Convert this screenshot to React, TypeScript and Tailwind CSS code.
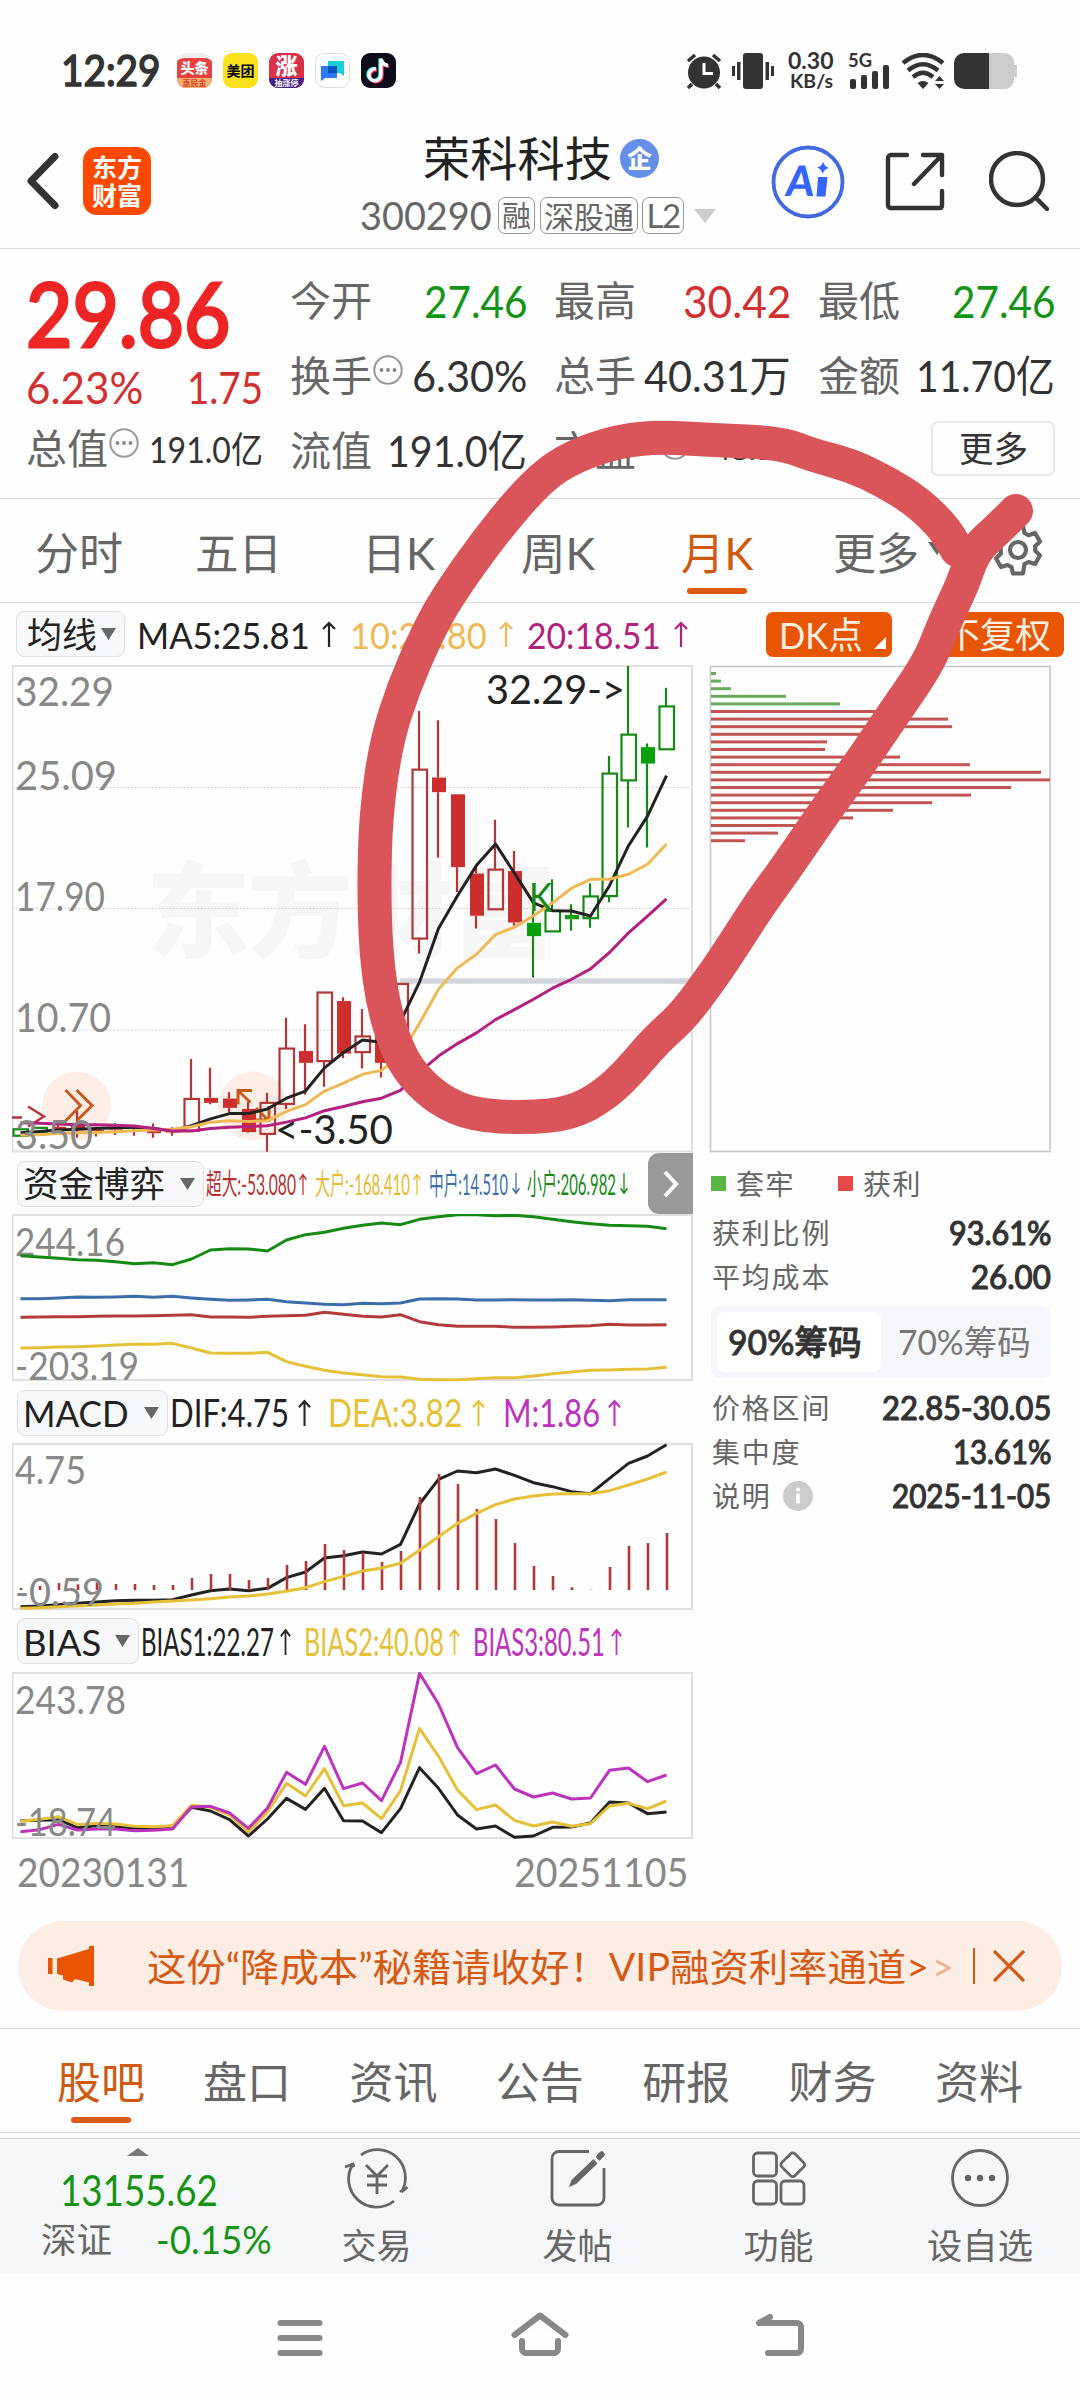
import { useLayoutEffect, useRef, useState } from 'react'
import type { ReactNode } from 'react'

const STEP = 19
const X0 = 20

// Text squeezed or stretched sideways to fill the width of its box
function FitText({ className, children }: { className: string; children: ReactNode }) {
  const outer = useRef<HTMLSpanElement>(null)
  const inner = useRef<HTMLSpanElement>(null)
  const [scale, setScale] = useState(1)

  useLayoutEffect(() => {
    if (outer.current && inner.current) {
      setScale(outer.current.clientWidth / inner.current.offsetWidth)
    }
  }, [])

  return (
    <span ref={outer} className={`block shrink-0 whitespace-nowrap leading-none ${className}`}>
      <span ref={inner} className="inline-block origin-left" style={{ transform: `scaleX(${scale})` }}>
        {children}
      </span>
    </span>
  )
}

function Arrow({ down, className }: { down?: boolean; className: string }) {
  return (
    <svg viewBox="0 0 14 26" preserveAspectRatio="none" className={`shrink-0 ${className}`} fill="none" stroke="currentColor" strokeWidth="2.2">
      {down ? <path d="M7 0V24M1 18l6 6 6-6" /> : <path d="M7 26V2M1 8l6-6 6 6" />}
    </svg>
  )
}

function Caret({ className }: { className: string }) {
  return (
    <svg viewBox="0 0 14 12" preserveAspectRatio="none" className={`shrink-0 ${className}`}>
      <path d="M0 0h14L7 12z" fill="currentColor" />
    </svg>
  )
}

function MoreDot() {
  return (
    <svg viewBox="0 0 30 30" className="mb-[11px] size-[30px] shrink-0">
      <circle cx="15" cy="15" r="13.7" fill="none" stroke="#999" strokeWidth="2" />
      <circle cx="8.5" cy="15" r="1.9" fill="#888" />
      <circle cx="15" cy="15" r="1.9" fill="#888" />
      <circle cx="21.5" cy="15" r="1.9" fill="#888" />
    </svg>
  )
}

function StatusBar() {
  return (
    <div className="flex h-[124px] items-start pl-[61px] pt-[53px] text-[#333]">
      <FitText className="mt-[-5px] w-[100px] text-[43px] [-webkit-text-stroke:1.6px]">12:29</FitText>
      <div className="ml-4 flex gap-[11px]">
        <div className="flex size-[35px] flex-col items-center overflow-hidden rounded-[9px] border-t-[5px] border-[#eee] bg-[#e8413f] text-white">
          <span className="text-[14px] font-black leading-[20px]">头条</span>
          <span className="w-full bg-[#f6b26b] text-center text-[8px] font-bold leading-[10px] text-[#e0402c]">惠民金</span>
        </div>
        <div className="flex size-[35px] items-center justify-center rounded-[9px] bg-[#fbe11c] text-[14px] font-bold text-black">美团</div>
        <div className="flex size-[35px] flex-col items-center overflow-hidden rounded-[9px] bg-[#dc3048] text-white">
          <span className="text-[22px] font-black leading-[25px]">涨</span>
          <span className="w-full bg-[#45208c] text-center text-[8px] font-bold leading-[10px]">抽涨停</span>
        </div>
        <svg viewBox="0 0 35 35" className="size-[35px]">
          <rect x="0.5" y="0.5" width="34" height="34" rx="9" fill="#fff" stroke="#ddd" />
          <path d="M6 13h16v12H10l-4 3z" fill="#2b7cf6" />
          <path d="M13 8h16v15l-4-3H13z" fill="#16cfd8" />
          <path d="M13 13h9v7h-9z" fill="#0a55b8" />
        </svg>
        <svg viewBox="0 0 35 35" className="size-[35px]">
          <rect width="35" height="35" rx="9" fill="#0d0b18" />
          <g fill="none" strokeWidth="3.4">
            <path d="M14 15.5a6 6 0 1 0 5 6V5.5c1 4 3.5 6 7 6.5" stroke="#25f4ee" />
            <path d="M16 17a6 6 0 1 0 5 6V7c1 4 3.5 6 7 6.5" stroke="#fe2c55" />
            <path d="M15 16a6 6 0 1 0 5 6V6c1 4 3.5 6 7 6.5" stroke="#fff" />
          </g>
        </svg>
      </div>
      <svg viewBox="0 0 36 36" className="ml-[290px] size-[36px]">
        <circle cx="18" cy="19.5" r="16" fill="#333" />
        <path d="M2 8l7-6M34 8l-7-6M6 31l-4 4M30 31l4 4" stroke="#333" strokeWidth="3.5" />
        <path d="M18 10v10.5h9" fill="none" stroke="#fff" strokeWidth="3" />
      </svg>
      <svg viewBox="0 0 42 36" className="ml-[10px] h-[36px] w-[42px]" fill="#333">
        <rect x="11" width="20" height="36" rx="3" />
        <rect x="5" y="9" width="3.5" height="18" />
        <rect x="33.5" y="9" width="3.5" height="18" />
        <rect y="13" width="3" height="10" />
        <rect x="39" y="13" width="3" height="10" />
      </svg>
      <div className="ml-[14px] mt-[-3px] flex flex-col items-center">
        <FitText className="w-[46px] text-[22px] font-bold">0.30</FitText>
        <FitText className="mt-[-1px] w-[43px] text-[19px] font-bold">KB/s</FitText>
      </div>
      <svg viewBox="0 0 43 37" className="ml-[14px] h-[37px] w-[43px]" fill="#333">
        <text x="0" y="13.5" fontSize="18" fontWeight="bold" textLength="24" lengthAdjust="spacingAndGlyphs">5G</text>
        <rect x="2" y="26" width="6" height="10" rx="2" />
        <rect x="13" y="22" width="6" height="14" rx="2" />
        <rect x="24" y="18" width="6" height="18" rx="2" />
        <rect x="35" y="12" width="6" height="24" rx="2" />
      </svg>
      <svg viewBox="0 0 44 37" className="ml-[10px] h-[37px] w-[44px]" fill="none" stroke="#333" strokeWidth="4.5">
        <path d="M2 10Q22-6 42 10M7 17.5Q22 5 37 17.5M12 24Q22 15.5 32 24" />
        <path d="M16.5 30q5.5-4 11 0L22 36zM34 28l4.5-5 4.5 5zM34 31h9l-4.5 5z" fill="#333" stroke="none" />
      </svg>
      <svg viewBox="0 0 63 36" className="ml-[9px] h-[36px] w-[63px]">
        <path d="M35 0h16a9 9 0 0 1 9 9v3h3v12h-3v3a9 9 0 0 1-9 9H35z" fill="#ccc" />
        <path d="M35 0H10A10 10 0 0 0 0 10v16a10 10 0 0 0 10 10h25z" fill="#333" />
      </svg>
    </div>
  )
}

function Header() {
  return (
    <div className="flex h-[125px] items-start border-b-[1.5px] border-[#d9d9d9] pl-[26px]">
      <svg viewBox="0 0 34 58" className="mt-[28px] h-[58px] w-[34px]" fill="none" stroke="#333" strokeWidth="7" strokeLinecap="round" strokeLinejoin="round">
        <path d="M29 4.5L5 29l24 24.5" />
      </svg>
      <div className="ml-[23px] mt-[23px] flex size-[68px] flex-col items-center justify-center rounded-[14px] bg-[#ff4800] text-[25px] font-bold leading-[28px] text-white">
        <span>东方</span>
        <span>财富</span>
      </div>
      <div className="ml-[209px] w-[364px]">
        <div className="flex items-center pl-[63px] pt-[11px]">
          <FitText className="w-[189px] text-[47px] text-[#222]">荣科科技</FitText>
          <span className="ml-[8px] flex size-[39px] items-center justify-center rounded-full bg-[#6590ea] text-[25px] font-black leading-none text-white">企</span>
        </div>
        <div className="mt-[15px] flex h-[37px] items-center text-[#666]">
          <FitText className="w-[132px] text-[39px]">300290</FitText>
          <span className="ml-[6px] flex h-[37px] w-[37px] items-center justify-center rounded-[7px] border-[1.5px] border-[#999] text-[29px] leading-none">融</span>
          <span className="ml-[5px] flex h-[37px] w-[98px] items-center justify-center rounded-[7px] border-[1.5px] border-[#999] text-[30px] leading-none">深股通</span>
          <span className="ml-[4px] flex h-[37px] w-[42px] items-center justify-center rounded-[7px] border-[1.5px] border-[#999] text-[33px] leading-none tracking-tighter">L2</span>
          <Caret className="ml-[10px] h-[14px] w-[22px] text-[#ccc]" />
        </div>
      </div>
      <svg viewBox="0 0 74 74" className="ml-[47px] mt-[21px] size-[74px]">
        <circle cx="37" cy="37" r="34.5" fill="none" stroke="#4169e1" strokeWidth="3.8" />
        <text x="14" y="51" fontSize="42" fontWeight="900" fill="#3565fb" textLength="28" lengthAdjust="spacingAndGlyphs" transform="skewX(-6) translate(5 0)">A</text>
        <path d="M47 32h9.500l-2 19.500h-9z" fill="#3565fb" />
        <path d="M52 16.500q1.500 5 6 6.500-5 1-6.500 6-1-5-5.500-6.500 5-1 6-6z" fill="#3565fb" />
      </svg>
      <svg viewBox="0 0 60 60" className="ml-[40px] mt-[28px] size-[60px]" fill="none" stroke="#333" strokeWidth="4.4" strokeLinecap="round" strokeLinejoin="round">
        <path d="M22 3H6a3 3 0 0 0-3 3v47a3 3 0 0 0 3 3h49a2 2 0 0 0 2-2V39M38 3h19v20M57 3L29 32" />
      </svg>
      <svg viewBox="0 0 60 60" className="ml-[44px] mt-[27px] size-[60px]" fill="none" stroke="#333" strokeWidth="4.4" strokeLinecap="round">
        <circle cx="28" cy="28" r="26" />
        <path d="M47 47l11 11" />
      </svg>
    </div>
  )
}

function Cell({ label, dot, children }: { label: string; dot?: boolean; children: ReactNode }) {
  return (
    <div className="flex h-[75px] items-center">
      <FitText className="w-[82px] text-[41px] text-[#666]">{label}</FitText>
      {dot && <span className="ml-[1px]"><MoreDot /></span>}
      <div className="ml-auto flex">{children}</div>
    </div>
  )
}

function Quote() {
  return (
    <div className="grid h-[250px] grid-cols-[237px_237px_237px_237px] gap-x-[27px] border-b-[1.5px] border-[#d9d9d9] pl-[26px] pt-[14px] text-[#333]">
      <div>
        <div className="flex h-[99px] items-center">
          <FitText className="w-[205px] text-[89px] text-[#ee2525] [-webkit-text-stroke:3.2px]">29.86</FitText>
        </div>
        <div className="flex h-[49px] items-center justify-between text-[44px] text-[#d13030]">
          <FitText className="w-[117px]">6.23%</FitText>
          <FitText className="w-[76px]">1.75</FitText>
        </div>
        <Cell label="总值" dot><FitText className="w-[114px] text-[36px]">191.0亿</FitText></Cell>
      </div>
      <div>
        <Cell label="今开"><FitText className="w-[103px] text-[44px] text-[#149414]">27.46</FitText></Cell>
        <Cell label="换手" dot><FitText className="w-[115px] text-[43px]">6.30%</FitText></Cell>
        <Cell label="流值"><FitText className="w-[140px] text-[43px]">191.0亿</FitText></Cell>
      </div>
      <div>
        <Cell label="最高"><FitText className="w-[108px] text-[44px] text-[#d13030]">30.42</FitText></Cell>
        <Cell label="总手"><FitText className="w-[147px] text-[43px]">40.31万</FitText></Cell>
        <div className="flex h-[75px] items-center">
          <FitText className="w-[82px] text-[41px] text-[#666]">市盈</FitText>
          <span className="ml-[24px]"><MoreDot /></span>
          <FitText className="ml-auto w-[78px] text-[24px]">48.12</FitText>
        </div>
      </div>
      <div>
        <Cell label="最低"><FitText className="w-[103px] text-[44px] text-[#149414]">27.46</FitText></Cell>
        <Cell label="金额"><FitText className="w-[139px] text-[43px]">11.70亿</FitText></Cell>
        <div className="ml-auto mt-[8px] flex h-[55px] w-[124px] items-center justify-center rounded-[7px] border-2 border-[#e8e8e8]">
          <FitText className="w-[69px] text-[35px]">更多</FitText>
        </div>
      </div>
    </div>
  )
}

function PeriodTabs() {
  return (
    <div className="flex h-[104px] items-start border-b-[1.5px] border-[#d9d9d9] pl-[35px] pt-[32px] text-[44px] text-[#666]">
      <FitText className="w-[88px]">分时</FitText>
      <FitText className="ml-[72px] w-[87px]">五日</FitText>
      <FitText className="ml-[80px] w-[73px]">日K</FitText>
      <FitText className="ml-[86px] w-[74px]">周K</FitText>
      <div className="ml-[86px] text-[#cf5a12]">
        <FitText className="w-[72px]">月K</FitText>
        <div className="ml-[6px] mt-[13px] h-[6px] w-[60px] rounded-full bg-[#dc5a12]" />
      </div>
      <FitText className="ml-[80px] w-[86px]">更多</FitText>
      <Caret className="ml-[9px] mt-[11px] h-[13px] w-[18px]" />
      <svg viewBox="0 0 52 52" className="ml-[46px] mt-[-7px] size-[52px]" fill="none" stroke="#666" strokeWidth="4.2" strokeLinejoin="round">
        <circle cx="26" cy="26" r="8" />
        <path d="M21 2.5h10l1.5 6.5 4 2.3 6.5-2.3 5 8.5-4.8 4.7v4.6l4.8 4.7-5 8.500-6.500-2-4 2.200L31 49.500H21l-1.500-6.300-4-2.200-6.500 2-5-8.500 4.800-4.700v-4.600L4 20.500 9 12l6.500 2 4-2.300z" />
      </svg>
    </div>
  )
}

function MaRow() {
  return (
    <div className="flex h-[62px] items-center pl-[16px] text-[37px]">
      <div className="flex h-[46px] w-[109px] items-center rounded-[8px] border border-[#dde2e6] bg-[#f6f8fa] pl-[10px] text-[#333]">
        <FitText className="w-[70px] text-[35px] text-[#222]">均线</FitText>
        <Caret className="ml-[4px] h-[12px] w-[15px] text-[#666]" />
      </div>
      <FitText className="ml-[12px] w-[173px] text-[#222]">MA5:25.81</FitText>
      <Arrow className="ml-[12px] h-[26px] w-[14px] text-[#222]" />
      <FitText className="ml-[14px] w-[137px] text-[#efb955]">10:22.80</FitText>
      <Arrow className="ml-[12px] h-[26px] w-[14px] text-[#efb955]" />
      <FitText className="ml-[14px] w-[134px] text-[#b3207f]">20:18.51</FitText>
      <Arrow className="ml-[13px] h-[26px] w-[14px] text-[#b3207f]" />
      <div className="ml-[78px] flex h-[45px] w-[126px] items-center rounded-[7px] bg-[#e85505] pl-[13px] text-[#fff0e4]">
        <FitText className="w-[84px] text-[37px]">DK点</FitText>
        <svg viewBox="0 0 12 12" className="ml-[11px] mt-[17px] size-[12px]"><path d="M12 0v12H0z" fill="#fff" /></svg>
      </div>
      <div className="ml-[44px] flex h-[45px] w-[128px] items-center rounded-[7px] bg-[#e85505] pl-[8px] text-[#fff0e4]">
        <FitText className="w-[107px] text-[35px]">不复权</FitText>
      </div>
    </div>
  )
}

// high, body top, body bottom, low
type Candle = [number, number, number, number, 'r' | 'R' | 'g' | 'G']

// Lower case is a hollow body, upper case a filled one
const CANDLES: Candle[] = [
  [1480, 1482, 1500, 1500, 'g'],
  [1476, 1478, 1490, 1492, 'g'],
  [1468, 1475, 1482, 1490, 'R'],
  [1430, 1470, 1480, 1505, 'R'],
  [1475, 1484, 1489, 1502, 'R'],
  [1465, 1478, 1483, 1498, 'R'],
  [1478, 1484, 1489, 1500, 'R'],
  [1466, 1487, 1493, 1506, 'R'],
  [1476, 1486, 1491, 1500, 'R'],
  [1285, 1397, 1486, 1486, 'r'],
  [1310, 1394, 1408, 1412, 'R'],
  [1378, 1396, 1422, 1435, 'R'],
  [1405, 1425, 1490, 1492, 'R'],
  [1380, 1408, 1495, 1545, 'r'],
  [1170, 1256, 1411, 1425, 'r'],
  [1188, 1263, 1296, 1385, 'R'],
  [1099, 1099, 1291, 1363, 'r'],
  [1112, 1123, 1270, 1283, 'R'],
  [1145, 1222, 1266, 1312, 'r'],
  [1160, 1220, 1296, 1337, 'R'],
  [1075, 1075, 1250, 1290, 'r'],
  [311, 475, 948, 990, 'r'],
  [337, 497, 538, 722, 'R'],
  [544, 544, 748, 818, 'R'],
  [748, 766, 884, 920, 'R'],
  [615, 755, 866, 866, 'r'],
  [703, 759, 903, 912, 'R'],
  [870, 904, 941, 1057, 'G'],
  [782, 870, 928, 928, 'g'],
  [852, 882, 894, 926, 'G'],
  [793, 830, 891, 918, 'g'],
  [437, 486, 829, 846, 'g'],
  [185, 377, 505, 637, 'g'],
  [402, 412, 458, 693, 'G'],
  [246, 298, 418, 418, 'g'],
]

const MA5 = [1492, 1488, 1484, 1482, 1480, 1478, 1476, 1480, 1486, 1472, 1453, 1438, 1438, 1425, 1395, 1375, 1310, 1267, 1232, 1238, 1180, 1070, 920, 828, 743, 683, 765, 848, 870, 871, 885, 800, 688, 605, 492]
const MA10 = [1498, 1497, 1494, 1492, 1491, 1489, 1486, 1484, 1482, 1475, 1462, 1458, 1460, 1458, 1432, 1413, 1375, 1353, 1328, 1317, 1275, 1185, 1090, 1030, 992, 937, 916, 884, 848, 807, 782, 782, 768, 740, 683]
const MA20 = [1464, 1465, 1467, 1469, 1469, 1471, 1473, 1480, 1487, 1487, 1480, 1476, 1474, 1472, 1462, 1450, 1430, 1418, 1405, 1395, 1373, 1322, 1277, 1242, 1212, 1175, 1147, 1118, 1087, 1062, 1033, 987, 932, 885, 837]

const FUND_GREEN = [317, 321, 325, 329, 331, 335, 341, 338, 344, 327, 300, 296, 297, 303, 270, 254, 247, 235, 226, 219, 224, 208, 200, 194, 194, 197, 196, 200, 208, 215, 221, 226, 227, 229, 236]
const FUND_BLUE = [446, 446, 444, 441, 442, 441, 439, 442, 439, 444, 448, 451, 450, 448, 455, 459, 463, 464, 460, 461, 459, 447, 446, 447, 450, 450, 449, 450, 450, 449, 451, 452, 449, 449, 449]
const FUND_RED = [502, 501, 500, 500, 499, 498, 498, 497, 496, 494, 501, 501, 502, 499, 497, 496, 487, 493, 499, 501, 494, 515, 524, 529, 529, 529, 532, 532, 531, 529, 527, 523, 525, 525, 524]
const FUND_YELLOW = [594, 593, 591, 590, 588, 585, 583, 583, 580, 594, 609, 610, 610, 607, 635, 649, 661, 669, 674, 680, 681, 688, 689, 689, 686, 683, 683, 678, 671, 666, 661, 660, 658, 657, 652]

const MACD_BARS = [1314, 1308, 1299, 1303, 1298, 1302, 1302, 1305, 1305, 1284, 1272, 1272, 1290, 1284, 1245, 1233, 1182, 1200, 1208, 1236, 1203, 1041, 972, 1002, 1077, 1107, 1179, 1248, 1278, 1312, 1319, 1251, 1188, 1179, 1149]
const DIF = [1370, 1368, 1364, 1360, 1356, 1352, 1351, 1351, 1349, 1335, 1322, 1317, 1322, 1315, 1283, 1266, 1224, 1217, 1206, 1212, 1183, 1062, 988, 963, 968, 957, 976, 998, 1010, 1025, 1031, 985, 940, 918, 884]
const DEA = [1375, 1373, 1370, 1368, 1365, 1362, 1360, 1356, 1353, 1350, 1346, 1341, 1338, 1332, 1324, 1313, 1295, 1279, 1263, 1254, 1240, 1201, 1160, 1120, 1090, 1064, 1047, 1038, 1032, 1031, 1031, 1022, 1005, 987, 966]

const BIAS1 = [662, 661, 659, 683, 677, 680, 684, 685, 678, 622, 633, 659, 708, 657, 595, 628, 565, 662, 663, 698, 626, 503, 565, 645, 687, 678, 712, 708, 682, 681, 669, 606, 609, 641, 636]
const BIAS2 = [664, 658, 650, 674, 670, 672, 679, 680, 677, 616, 622, 645, 696, 636, 550, 588, 506, 617, 609, 656, 572, 385, 469, 570, 629, 615, 661, 678, 666, 679, 671, 618, 610, 626, 603]
const BIAS3 = [695, 689, 673, 690, 687, 687, 692, 691, 687, 621, 619, 639, 685, 624, 517, 553, 439, 566, 549, 602, 487, 220, 312, 443, 521, 495, 567, 591, 579, 597, 594, 511, 504, 545, 525]

const CHIPS = [5, 10, 20, 75, 129, 175, 237, 241, 158, 116, 114, 189, 259, 330, 339, 300, 260, 221, 182, 142, 104, 67, 34]

function Line({ data, unit, color }: { data: number[]; unit: number; color: string }) {
  const points = data.map((v, i) => `${X0 + 0.5 + i * STEP},${v / unit}`).join(' ')
  return <polyline points={points} fill="none" stroke={color} strokeWidth="3" strokeLinejoin="round" />
}

function Label({ x, y, w, size = 41, color = '#888', children }: { x: number; y: number; w: number; size?: number; color?: string; children: string }) {
  return (
    <text x={x} y={y} fontSize={size} fill={color} textLength={w} lengthAdjust="spacingAndGlyphs">{children}</text>
  )
}

function KChart() {
  return (
    <svg viewBox="12 65 681 488" className="block h-[488px] w-[681px]">
      <text x="146" y="350" fontSize="104" fontWeight="900" fill="#f6f6f6" textLength="410">东方财富</text>
      {[187.5, 308.5, 430].map((y) => (
        <path key={y} d={`M12 ${y}H692`} stroke="#ccc" strokeDasharray="1.5 2" />
      ))}
      <rect x="12.5" y="66" width="679.5" height="485.5" fill="none" stroke="#e0e0e0" strokeWidth="2" />
      <path d="M400 381H692" stroke="#d3d7dd" strokeWidth="5.5" />
      <circle cx="76.5" cy="506" r="34.5" fill="#fdefe8" />
      <circle cx="253" cy="506" r="34.5" fill="#fdefe8" />
      {CANDLES.map(([high, top, bottom, low, kind], i) => {
        const x = X0 + i * STEP
        const green = kind === 'g' || kind === 'G'
        const hollow = kind === 'r' || kind === 'g'
        const color = green ? '#148a14' : hollow ? '#b23838' : '#c03030'
        return (
          <g key={i}>
            <path d={`M${x} ${high / 2.8}V${top / 2.8}M${x} ${bottom / 2.8}V${low / 2.8}`} stroke={color} strokeWidth="2.2" />
            {hollow ? (
              <rect x={x - 6.5} y={top / 2.8} width="14.5" height={(bottom - top) / 2.8} fill="none" stroke={color} strokeWidth="2.2" />
            ) : (
              <rect x={x - 6} y={top / 2.8} width="14" height={(bottom - top) / 2.8} fill={green ? '#08a008' : '#cc2d2d'} />
            )}
          </g>
        )
      })}
      <g fill="none" stroke="#c95a1c" strokeWidth="3">
        <path d="M65.5 490l15 15.5-15 15.5M76.5 490l15.5 15.5L76.5 521" />
        <path d="M252 490.5h-14v14M238 490.5l12.5 12M256 508l12 12M269 506v14h-13" />
      </g>
      <path d="M12 517.5h10M28 506.5l16 10-16 10" fill="none" stroke="#b8343c" strokeWidth="2.4" />
      <Line data={MA5} unit={2.8} color="#222" />
      <Line data={MA10} unit={2.8} color="#efb955" />
      <Line data={MA20} unit={2.8} color="#b3207f" />
      <Label x={15} y={106} w={99}>32.29</Label>
      <Label x={15} y={190} w={102}>25.09</Label>
      <Label x={15} y={311} w={90}>17.90</Label>
      <Label x={15} y={432} w={96}>10.70</Label>
      <Label x={15} y={549} w={78}>3.50</Label>
      <Label x={486} y={104} w={139} color="#222">{'32.29->'}</Label>
      <Label x={275} y={544} w={118} color="#222">{'<-3.50'}</Label>
      <Label x={529} y={311} w={23} size={39} color="#148a14">K</Label>
    </svg>
  )
}

function FundChart() {
  return (
    <svg viewBox="12 64 681 168" className="block h-[168px] w-[681px]">
      <rect x="12.5" y="65" width="679.5" height="165" fill="none" stroke="#e0e0e0" strokeWidth="2" />
      <Label x={15} y={106} w={110} size={38}>244.16</Label>
      <Label x={15} y={230} w={124} size={38}>-203.19</Label>
      <Line data={FUND_GREEN} unit={3} color="#148a14" />
      <Line data={FUND_BLUE} unit={3} color="#3a6ea8" />
      <Line data={FUND_RED} unit={3} color="#b23c3c" />
      <Line data={FUND_YELLOW} unit={3} color="#e6c137" />
    </svg>
  )
}

function MacdChart() {
  return (
    <svg viewBox="12 293 681 167" className="block h-[167px] w-[681px]">
      <rect x="12.5" y="294" width="679.5" height="165" fill="none" stroke="#e0e0e0" strokeWidth="2" />
      <Label x={15} y={334} w={71} size={38}>4.75</Label>
      <Line data={DIF} unit={3} color="#222" />
      {MACD_BARS.map((v, i) => (
        <path key={i} d={`M${X0 + 1 + i * STEP} 440V${v / 3}`} stroke="#b23838" strokeWidth="2.6" />
      ))}
      <Line data={DEA} unit={3} color="#e6c137" />
      <Label x={15} y={456} w={89} size={38}>-0.59</Label>
    </svg>
  )
}

function BiasChart() {
  return (
    <svg viewBox="12 72 681 167" className="block h-[167px] w-[681px]">
      <rect x="12.5" y="73" width="679.5" height="165" fill="none" stroke="#e0e0e0" strokeWidth="2" />
      <Line data={BIAS1} unit={3} color="#222" />
      <Line data={BIAS2} unit={3} color="#e6c137" />
      <Line data={BIAS3} unit={3} color="#bd33bd" />
      <Label x={15} y={114} w={111} size={38}>243.78</Label>
      <Label x={15} y={236} w={101} size={38}>-18.74</Label>
    </svg>
  )
}

function Picker({ className, text, children }: { className: string; text: string; children: string }) {
  return (
    <div className={`ml-[5px] flex h-[46px] shrink-0 items-center justify-between rounded-[8px] border border-[#dde2e6] bg-[#f6f8fa] pl-[5px] pr-[8px] ${className}`}>
      <FitText className={`text-[#222] ${text}`}>{children}</FitText>
      <Caret className="h-[12px] w-[15px] text-[#666]" />
    </div>
  )
}

function LeftColumn() {
  return (
    <div className="ml-[12px] w-[681px]">
      <KChart />
      <div className="flex h-[61px] items-center text-[29px]">
        <Picker className="w-[187px]" text="w-[142px] text-[35px]">资金博弈</Picker>
        <FitText className="ml-[2px] w-[90px] text-[#b83030]">超大:-53.080</FitText>
        <Arrow className="ml-[3px] h-[22px] w-[8px] text-[#b83030]" />
        <FitText className="ml-[8px] w-[95px] text-[#e6bb30]">大户:-168.410</FitText>
        <Arrow className="ml-[3px] h-[22px] w-[8px] text-[#e6bb30]" />
        <FitText className="ml-[8px] w-[79px] text-[#3a6ea8]">中户:14.510</FitText>
        <Arrow down className="ml-[4px] h-[22px] w-[8px] text-[#3a6ea8]" />
        <FitText className="ml-[7px] w-[89px] text-[#148a14]">小户:206.982</FitText>
        <Arrow down className="ml-[4px] h-[22px] w-[8px] text-[#148a14]" />
        <div className="ml-auto flex h-[61px] w-[45px] items-center justify-center rounded-l-[11px] bg-[#999]">
          <svg viewBox="0 0 16 28" className="h-[28px] w-[16px]" fill="none" stroke="#fff" strokeWidth="4"><path d="M2 2l11 12L2 26" /></svg>
        </div>
      </div>
      <FundChart />
      <div className="flex h-[61px] items-center text-[39px]">
        <Picker className="w-[151px]" text="w-[106px] text-[37px]">MACD</Picker>
        <FitText className="ml-[2px] w-[119px] text-[#222]">DIF:4.75</FitText>
        <Arrow className="ml-[9px] h-[27px] w-[13px] text-[#222]" />
        <FitText className="ml-[17px] w-[134px] text-[#e6c137]">DEA:3.82</FitText>
        <Arrow className="ml-[10px] h-[27px] w-[13px] text-[#e6c137]" />
        <FitText className="ml-[18px] w-[97px] text-[#bd33bd]">M:1.86</FitText>
        <Arrow className="ml-[8px] h-[27px] w-[13px] text-[#bd33bd]" />
      </div>
      <MacdChart />
      <div className="flex h-[62px] items-center text-[39px]">
        <Picker className="w-[122px]" text="w-[78px] text-[37px]">BIAS</Picker>
        <FitText className="ml-[2px] w-[133px] text-[#222]">BIAS1:22.27</FitText>
        <Arrow className="ml-[6px] h-[27px] w-[11px] text-[#222]" />
        <FitText className="ml-[13px] w-[140px] text-[#e6c137]">BIAS2:40.08</FitText>
        <Arrow className="ml-[5px] h-[27px] w-[11px] text-[#e6c137]" />
        <FitText className="ml-[13px] w-[132px] text-[#bd33bd]">BIAS3:80.51</FitText>
        <Arrow className="ml-[6px] h-[27px] w-[11px] text-[#bd33bd]" />
      </div>
      <BiasChart />
      <div className="flex h-[64px] items-center justify-between pl-[5px] pr-[5px] text-[41px] text-[#888]">
        <FitText className="w-[172px]">20230131</FitText>
        <FitText className="w-[174px]">20251105</FitText>
      </div>
    </div>
  )
}

function Row({ label, info, children }: { label: ReactNode; info?: boolean; children: ReactNode }) {
  return (
    <div className="flex h-[44px] items-center">
      <span className="text-[28px] leading-none tracking-[1.8px] text-[#666]">{label}</span>
      {info && (
        <svg viewBox="0 0 30 30" className="ml-[11px] size-[30px]">
          <circle cx="15" cy="15" r="15" fill="#ccc" />
          <circle cx="15" cy="8.5" r="2" fill="#fff" />
          <path d="M15 12.5v10" stroke="#fff" strokeWidth="3.6" />
        </svg>
      )}
      <div className="ml-auto text-[32px] text-[#333] [-webkit-text-stroke:1.2px]">{children}</div>
    </div>
  )
}

function ChipPanel() {
  return (
    <div className="ml-[16px] w-[342px]">
      <svg viewBox="709 65 342 488" className="block h-[488px] w-[342px]">
        <rect x="710.5" y="66.5" width="339.5" height="485" fill="none" stroke="#c8c8c8" strokeWidth="1.6" />
        {CHIPS.map((w, i) => (
          <rect key={i} x="711" y={72 + i * 7.6} width={w} height="3" fill={i < 5 ? '#6cab5c' : '#c35454'} />
        ))}
      </svg>
      <div className="flex h-[58px] items-center pl-[2px] pt-[3px] text-[28px] leading-none tracking-[1.5px] text-[#666]">
        <span className="mr-[10px] size-[15px] bg-[#5ab545]" />套牢
        <span className="ml-[43px] mr-[10px] size-[15px] bg-[#e84848]" />获利
      </div>
      <div className="pl-[3px]">
        <Row label="获利比例"><FitText className="w-[102px]">93.61%</FitText></Row>
        <Row label="平均成本"><FitText className="w-[80px]">26.00</FitText></Row>
      </div>
      <div className="ml-[2px] mt-[7px] flex h-[72px] items-center rounded-[8px] bg-[#f6f7fa] p-[6px]">
        <div className="flex h-[60px] w-[164px] items-center rounded-[8px] bg-white pl-[11px]">
          <FitText className="w-[134px] text-[34px] font-medium text-[#333] [-webkit-text-stroke:0.8px]">90%筹码</FitText>
        </div>
        <FitText className="ml-[17px] w-[133px] text-[34px] text-[#777]">70%筹码</FitText>
      </div>
      <div className="mt-[8px] pl-[3px]">
        <Row label="价格区间"><FitText className="w-[169px]">22.85-30.05</FitText></Row>
        <Row label="集中度"><FitText className="w-[98px]">13.61%</FitText></Row>
        <Row label="说明" info><FitText className="w-[159px]">2025-11-05</FitText></Row>
      </div>
    </div>
  )
}

function Banner() {
  return (
    <div className="mx-[18px] mt-[18px] flex h-[90px] items-center rounded-full bg-[#fcede5] pl-[30px] text-[#d65a14]">
      <svg viewBox="0 0 46 40" className="h-[40px] w-[46px]" fill="#ea5504">
        <path d="M0 12h4.5v16H0zM9 12.5L41 3V0h5v40h-5v-3.5l-14-3.5-3 3.5-9-3v-4l-6-1.5z" />
      </svg>
      <FitText className="ml-[53px] w-[782px] text-[38px]">这份“降成本”秘籍请收好！VIP融资利率通道&gt;</FitText>
      <span className="ml-[3px] text-[38px] leading-none opacity-40">&gt;</span>
      <span className="ml-[19px] h-[36px] w-[1.5px] bg-[#d65a14]" />
      <svg viewBox="0 0 32 32" className="ml-[18px] size-[32px]" stroke="#d65a14" strokeWidth="3.2"><path d="M1 1l30 30M31 1L1 31" /></svg>
    </div>
  )
}

function InfoTabs() {
  const tabs = ['盘口', '资讯', '公告', '研报', '财务', '资料']
  return (
    <div className="mt-[17px] flex h-[105px] items-start gap-[58px] border-y-[1.5px] border-[#d4d4d4] pl-[57px] pt-[31px] text-[44px] text-[#666]">
      <div className="text-[#cf5a12]">
        <FitText className="w-[88px]">股吧</FitText>
        <div className="ml-[14px] mt-[13px] h-[6px] w-[60px] rounded-full bg-[#dc5a12]" />
      </div>
      {tabs.map((t) => (
        <FitText key={t} className="w-[88.4px]">{t}</FitText>
      ))}
    </div>
  )
}

function Action({ label, wide, children }: { label: string; wide?: boolean; children: ReactNode }) {
  return (
    <div className="flex w-[201px] flex-col items-center pt-[9px] text-[#666]">
      <svg viewBox="0 0 60 60" className="size-[60px] overflow-visible" fill="none" stroke="#666" strokeWidth="2.8">{children}</svg>
      <FitText className={wide ? 'mt-[20px] w-[106px] text-[35px]' : 'mt-[20px] w-[70px] text-[35px]'}>{label}</FitText>
    </div>
  )
}

function BottomBar() {
  return (
    <div className="mt-[5px] flex h-[136px] border-t-[1.5px] border-[#d4d4d4] bg-[#f6f7f9]">
      <div className="w-[276px] pl-[41px] pt-[9px]">
        <svg viewBox="0 0 22 8" className="ml-[86px] h-[8px] w-[22px]"><path d="M11 0l11 8H0z" fill="#777" /></svg>
        <FitText className="ml-[19px] mt-[12px] w-[158px] text-[43px] text-[#149414]">13155.62</FitText>
        <div className="mt-[9px] flex items-center">
          <FitText className="w-[71px] text-[35px] text-[#666]">深证</FitText>
          <FitText className="ml-[44px] w-[116px] text-[39px] text-[#149414]">-0.15%</FitText>
        </div>
      </div>
      <Action label="交易">
        <path d="M14 7A28 28 0 0 1 54.5 44M54.5 44l6-5M54.5 44l-1-2M47 53A28 28 0 0 1 6 16M-2 19l8-3 1 3M19 17l11 11 11-11M30 28v18M20 28h20M20 37h20" />
      </Action>
      <Action label="发帖">
        <path d="M41 3.5H11a7 7 0 0 0-7 7V50a7 7 0 0 0 7 7h38a7 7 0 0 0 7-7V20" />
        <path d="M48 9l6-6 3 3.5-5.5 6.5zM45.5 11l4 4.5L28 36l-7 3 2.5-7z" fill="#666" stroke="none" />
        <path d="M53.5 6.5l-2 2" strokeWidth="6" strokeLinecap="round" />
      </Action>
      <Action label="功能">
        <rect x="4.5" y="5" width="23" height="23" rx="4" />
        <rect x="4.5" y="33" width="23" height="23" rx="4" />
        <rect x="32" y="33" width="23" height="23" rx="4" />
        <rect x="34.5" y="7.5" width="18.5" height="18.5" rx="3" transform="rotate(45 43.75 16.75)" />
      </Action>
      <Action label="设自选" wide>
        <circle cx="30" cy="30" r="27.5" />
        <g fill="#666" stroke="none">
          <circle cx="18" cy="30" r="3.2" />
          <circle cx="30" cy="30" r="3.2" />
          <circle cx="42" cy="30" r="3.2" />
        </g>
      </Action>
    </div>
  )
}

function SystemNav() {
  return (
    <div className="flex h-[126px] items-start justify-center pt-[36px]">
      <svg viewBox="0 0 540 50" className="h-[50px] w-[540px]" fill="none" stroke="#888" strokeWidth="6" strokeLinecap="round" strokeLinejoin="round">
        <path d="M10.5 13h39M10.5 28h39M10.5 43h39" />
        <path d="M244.5 25L270 5.5 295.5 25M252 31v8a4 4 0 0 0 4 4h28a4 4 0 0 0 4-4v-8" />
        <path d="M500 7l-11 6h38a4 4 0 0 1 4 4v22a4 4 0 0 1-4 4h-29" />
      </svg>
    </div>
  )
}

const MARK: [number, number][] = [
  [1016, 511], [998, 529], [980, 545], [970, 562], [963, 583], [955, 600], [942, 629], [928, 664], [892, 716], [861, 762], [825, 811],
  [784, 871], [761, 902], [727, 955], [707, 984], [682, 1017], [656, 1040], [627, 1074], [603, 1096], [572, 1113], [527, 1118],
  [473, 1115], [439, 1100], [412, 1075], [396, 1047], [383, 1004], [376, 952], [374, 886], [376, 814], [386, 743],
  [403, 689], [426, 636], [447, 597], [494, 531], [540, 478], [574, 456], [619, 441], [660, 437], [712, 440], [781, 443],
  [812, 455], [850, 465], [886, 482], [919, 503], [945, 529], [957, 550],
]

// Freehand loop drawn over the page, smoothed through the midpoints
function Mark() {
  let d = `M${MARK[0][0]} ${MARK[0][1]}`
  for (let i = 1; i < MARK.length - 1; i++) {
    const [x, y] = MARK[i]
    const [nx, ny] = MARK[i + 1]
    d += `Q${x} ${y} ${(x + nx) / 2} ${(y + ny) / 2}`
  }
  d += `L${MARK[MARK.length - 1].join(' ')}`
  return (
    <svg viewBox="0 0 1080 2400" className="pointer-events-none absolute left-0 top-0 h-[2400px] w-[1080px]">
      <path d={d} fill="none" stroke="#da5559" strokeWidth="34" strokeLinecap="round" strokeLinejoin="round" />
    </svg>
  )
}

export default function App() {
  return (
    <div className="relative h-[2400px] w-[1080px] overflow-hidden bg-[#fefefe] font-['Lato','Noto_Sans_CJK_SC',sans-serif]">
      <StatusBar />
      <Header />
      <Quote />
      <PeriodTabs />
      <MaRow />
      <div className="flex">
        <LeftColumn />
        <ChipPanel />
      </div>
      <Banner />
      <InfoTabs />
      <BottomBar />
      <SystemNav />
      <Mark />
    </div>
  )
}
